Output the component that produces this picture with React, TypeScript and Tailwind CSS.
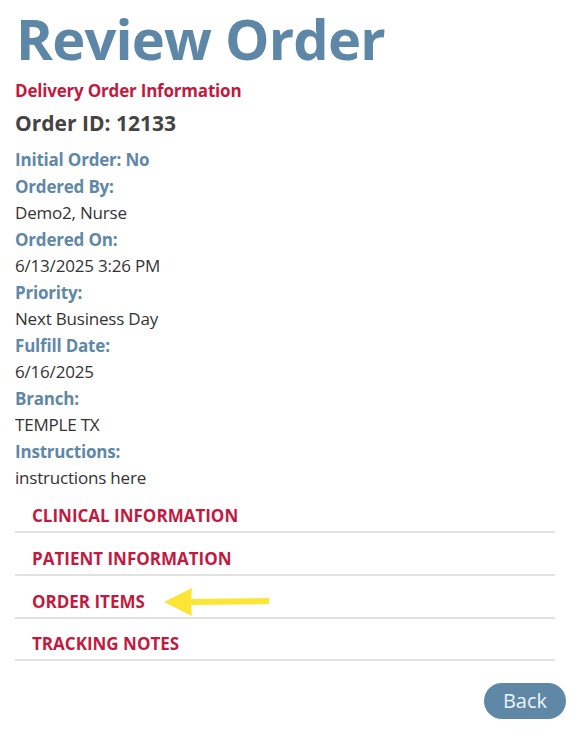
import React from "react";

const fields: { label: string; value?: string; inline?: string }[] = [
  { label: "Initial Order:", inline: "No" },
  { label: "Ordered By:", value: "Demo2, Nurse" },
  { label: "Ordered On:", value: "6/13/2025 3:26 PM" },
  { label: "Priority:", value: "Next Business Day" },
  { label: "Fulfill Date:", value: "6/16/2025" },
  { label: "Branch:", value: "TEMPLE TX" },
  { label: "Instructions:", value: "instructions here" },
];

const sections = ["CLINICAL INFORMATION", "PATIENT INFORMATION", "ORDER ITEMS", "TRACKING NOTES"];

function Arrow() {
  return (
    <svg width="106" height="30" viewBox="0 0 106 30" className="ml-[19px]">
      <polygon points="0,15 28,1 27,12 105,11 105,17 27,18 28,29" fill="#fde534" />
    </svg>
  );
}

export default function App() {
  return (
    <div className="w-[582px] h-[736px] bg-white font-['Open_Sans',sans-serif] pl-[15px] pr-[17px] pt-[2px]">
      <h1 className="text-[56px] leading-[72px] font-bold text-[#5e87a7] tracking-[-0.8px] pl-[1px]">Review Order</h1>
      <div className="text-[17px] leading-[22px] font-bold text-[#c21a3f] mt-[6px] tracking-[-0.2px]">Delivery Order Information</div>
      <div className="text-[21px] leading-[26px] font-bold text-[#444444] mt-[8px] tracking-[0px]">Order ID: 12133</div>
      <div className="mt-[11px] text-[17px] leading-[26.5px] tracking-[-0.2px]">
        {fields.map((f) => (
          <React.Fragment key={f.label}>
            <div className="font-bold text-[#5f88a8]">
              {f.label}
              {f.inline ? " " + f.inline : ""}
            </div>
            {f.value && <div className="text-[#333333]">{f.value}</div>}
          </React.Fragment>
        ))}
      </div>
      <div className="-mt-[1px] mr-[10px]">
        {sections.map((s) => (
          <div key={s} className="h-[42.7px] border-b-2 border-[#e2e2e2] flex items-center pl-[17px] pt-[11px]">
            <span className="text-[17px] leading-[24px] font-bold text-[#c21a3f] tracking-[0px]">{s}</span>
            {s === "ORDER ITEMS" && <Arrow />}
          </div>
        ))}
      </div>
      <div className="flex justify-end mt-[22px]">
        <button className="w-[82px] h-[36px] rounded-full bg-[#5f87a6] text-[#eef4fa] text-[20px] leading-none -mr-[1px]">
          Back
        </button>
      </div>
    </div>
  );
}
